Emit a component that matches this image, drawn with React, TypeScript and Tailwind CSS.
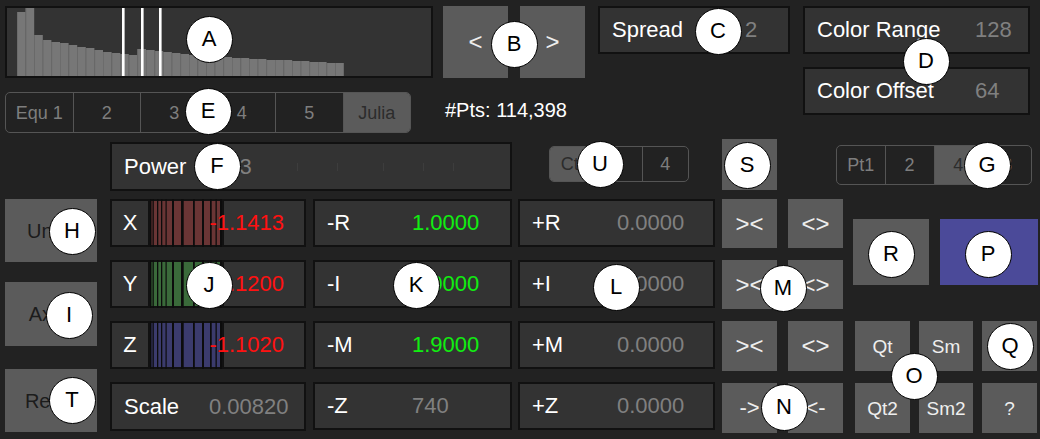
import React from "react";

const panel = "bg-[#333333] border-2 border-[#111111]";
const btn = "bg-[#5b5b5b] flex items-center justify-center";

const barTops = [
  12, 7, 35, 40, 42, 43, 45, 47, 48, 50, 52, 53, 54, 55, 49, 50, 51, 52, 53, 54, 55,
  56, 56, 57, 57, 58, 58, 59, 59, 60, 60, 60, 61, 61, 62, 62, 63, 63,
];

const stripeLines: [number, number][] = [
  [0, 1.5], [2.5, 1.3], [7, 1.3], [11, 1.3], [15.5, 1.2], [22, 2], [31, 2.7],
  [43, 1.8], [52, 2], [60, 1.7], [65.5, 1.3], [70, 2],
];

const marks: [string, number, number][] = [
  ["A", 209, 39], ["B", 514, 44], ["C", 718, 31], ["D", 926, 61], ["E", 208, 111],
  ["F", 217, 166], ["G", 987, 165], ["H", 72, 231], ["I", 69, 315], ["J", 209, 285],
  ["K", 416, 285], ["L", 616, 287], ["M", 783, 288], ["N", 784, 407], ["O", 914, 376],
  ["P", 988, 254], ["Q", 1010, 346], ["R", 891, 254], ["S", 747, 165], ["T", 72, 400],
  ["U", 600, 164],
];

const Histogram = () => (
  <div className={`${panel} w-[428px] h-[72px]`}>
    <svg width="424" height="68" className="block">
      {barTops.map((t, i) => {
        const x = 10 + i * 8.6;
        const y = Math.max(0, t - 8);
        return (
          <g key={i}>
            <rect x={x} y={y} width="8.6" height={68 - y} fill="#777777" />
            <rect x={x} y={y} width="0.8" height={68 - y} fill="#6a6a6a" />
          </g>
        );
      })}
      {[115, 134, 152].map((x) => (
        <rect key={x} x={x} y="0" width="2.6" height="68" fill="#ffffff" />
      ))}
    </svg>
  </div>
);

const Segmented = ({ items, active, w, h }: { items: string[]; active: number; w: string; h: string }) => (
  <div className={`${w} ${h} flex rounded-[5px] border-[1.5px] border-[#555555] overflow-hidden text-[18px]`}>
    {items.map((it, i) => (
      <div
        key={i}
        className={`flex-1 flex items-center justify-center ${i > 0 ? "border-l-[1.5px] border-[#555555]" : ""} ${
          i === active ? "bg-[#5b5b5b] text-[#2c2c2c]" : "text-[#7e7e7e]"
        }`}
      >
        {it}
      </div>
    ))}
  </div>
);

const Stripes = ({ color }: { color: string }) => (
  <svg width="72" height="48" className="block shrink-0">
    <rect x="0" y="0" width="72" height="48" fill={color} />
    <rect x="0" y="0" width="72" height="2" fill="#111111" />
    <rect x="0" y="46" width="72" height="2" fill="#111111" />
    {stripeLines.map(([x, w]) => (
      <rect key={x} x={x} y="0" width={w} height="48" fill="#0c0c0c" />
    ))}
  </svg>
);

const AxisPanel = ({ label, value, color }: { label: string; value: string; color: string }) => (
  <div className="flex w-[196px] h-[48px]">
    <div className={`${panel} w-[40px] flex items-center justify-center text-white shrink-0`}>{label}</div>
    <Stripes color={color} />
    <div className={`${panel} w-[84px] flex items-center justify-end pr-[20px] text-[#ff1111] whitespace-nowrap`}>
      {value}
    </div>
  </div>
);

const ValuePanel = ({
  label,
  value,
  valueColor = "text-[#808080]",
  w = "w-[199px]",
}: {
  label: string;
  value: string;
  valueColor?: string;
  w?: string;
}) => (
  <div className={`${panel} ${w} h-[48px] flex items-center`}>
    <div className="w-[97px] pl-[12px] text-white">{label}</div>
    <div className={valueColor}>{value}</div>
  </div>
);

const Btn = ({ children, cls }: { children?: React.ReactNode; cls: string }) => (
  <div className={`${btn} ${cls}`}>{children}</div>
);

export default function App() {
  return (
    <div className="relative w-[1040px] h-[439px] bg-[#222222] overflow-hidden font-['Liberation_Sans',Arial,sans-serif] text-[22px] leading-none">
      {/* top area */}
      <div className="flex pt-[6px] pl-[5px]">
        <div className="flex flex-col w-[428px]">
          <Histogram />
          <div className="mt-[14px]">
            <Segmented items={["Equ 1", "2", "3", "4", "5", "Julia"]} active={5} w="w-[406px]" h="h-[41px]" />
          </div>
        </div>
        <div className="ml-[10px] flex flex-col">
          <div className="flex gap-[12px] text-[24px] text-[#eeeeee]">
            <Btn cls="w-[65px] h-[72px]">&lt;</Btn>
            <Btn cls="w-[65px] h-[72px]">&gt;</Btn>
          </div>
          <div className="mt-[22px] pl-[2px] text-[20px] text-white">#Pts: 114,398</div>
        </div>
        <div className="ml-[13px]">
          <div className={`${panel} w-[192px] h-[48px] flex items-center`}>
            <div className="w-[145px] pl-[12px] text-white">Spread</div>
            <div className="text-[#808080]">2</div>
          </div>
        </div>
        <div className="ml-[13px] flex flex-col gap-[13px]">
          <div className={`${panel} w-[227px] h-[48px] flex items-center`}>
            <div className="w-[170px] pl-[12px] text-white">Color Range</div>
            <div className="text-[#808080]">128</div>
          </div>
          <div className={`${panel} w-[227px] h-[48px] flex items-center`}>
            <div className="w-[170px] pl-[12px] text-white">Color Offset</div>
            <div className="text-[#808080]">64</div>
          </div>
        </div>
      </div>

      {/* bottom area */}
      <div className="flex pl-[5px] mt-[6px]">
        <div className="flex flex-col w-[92px] text-[20px] text-[#1c1c1c]">
          <Btn cls="mt-[60px] h-[63px]">Undo</Btn>
          <Btn cls="mt-[20px] h-[64px]">Axes</Btn>
          <Btn cls="mt-[23px] h-[63px]">Reset</Btn>
        </div>
        <div className="ml-[13px] grid grid-cols-[203px_205px_204px_66px_65px_187px] grid-rows-[60px_61px_61px_61px_51px]">
          {/* row 0 */}
          <div className={`${panel} col-span-2 mt-[3px] w-[402px] h-[49px] flex items-center`}>
            <div className="w-[97px] pl-[12px] text-white">Power</div>
            <div className="w-[60px] text-[#808080]">2.23</div>
            <svg width="200" height="12" className="block">
              {[28, 68, 114, 154, 184].map((x) => (
                <rect key={x} x={x} y="2" width="1" height="8" fill="#3d3d3d" />
              ))}
            </svg>
          </div>
          <div className="mt-[7px] ml-[31px]">
            <Segmented items={["Ctr", "3", "4"]} active={0} w="w-[140px]" h="h-[36px]" />
          </div>
          <Btn cls="w-[55px] h-[51px] text-[#eeeeee]" />
          <div />
          <div className="-ml-[17px] mt-[6px]">
            <Segmented items={["Pt1", "2", "4", "8"]} active={2} w="w-[196px]" h="h-[40px]" />
          </div>

          {/* row 1 */}
          <AxisPanel label="X" value="-1.1413" color="#6a3535" />
          <ValuePanel label="-R" value="1.0000" valueColor="text-[#11ee11]" />
          <ValuePanel label="+R" value="0.0000" w="w-[197px]" />
          <Btn cls="w-[55px] h-[49px] text-[24px] text-[#eeeeee]">&gt;&lt;</Btn>
          <Btn cls="w-[55px] h-[49px] text-[24px] text-[#eeeeee]">&lt;&gt;</Btn>
          <div className="row-span-2 flex items-start mt-[20px] gap-[11px]">
            <Btn cls="w-[76px] h-[66px]" />
            <div className="w-[98px] h-[66px] bg-[#4b4a99]" />
          </div>

          {/* row 2 */}
          <AxisPanel label="Y" value="-1.1200" color="#3a6a3a" />
          <ValuePanel label="-I" value="1.0000" valueColor="text-[#11ee11]" />
          <ValuePanel label="+I" value="0.0000" w="w-[197px]" />
          <Btn cls="w-[55px] h-[49px] text-[24px] text-[#eeeeee]">&gt;&lt;</Btn>
          <Btn cls="w-[55px] h-[49px] text-[24px] text-[#eeeeee]">&lt;&gt;</Btn>

          {/* row 3 */}
          <AxisPanel label="Z" value="-1.1020" color="#3b3b6d" />
          <ValuePanel label="-M" value="1.9000" valueColor="text-[#11ee11]" />
          <ValuePanel label="+M" value="0.0000" w="w-[197px]" />
          <Btn cls="w-[55px] h-[50px] text-[24px] text-[#eeeeee]">&gt;&lt;</Btn>
          <Btn cls="w-[55px] h-[50px] text-[24px] text-[#eeeeee]">&lt;&gt;</Btn>
          <div className="flex gap-[9px] ml-[2px] text-[19px] text-[#eeeeee]">
            <Btn cls="w-[55px] h-[50px]">Qt</Btn>
            <Btn cls="w-[54px] h-[50px]">Sm</Btn>
            <Btn cls="w-[55px] h-[50px]" />
          </div>

          {/* row 4 */}
          <ValuePanel label="Scale" value="0.00820" w="w-[196px] h-[49px]" />
          <ValuePanel label="-Z" value="740" />
          <ValuePanel label="+Z" value="0.0000" w="w-[197px]" />
          <Btn cls="mt-[1px] w-[55px] h-[50px] text-[22px] text-[#eeeeee]">-&gt;</Btn>
          <Btn cls="mt-[1px] w-[55px] h-[50px] text-[22px] text-[#eeeeee]">&lt;-</Btn>
          <div className="flex gap-[9px] ml-[2px] mt-[1px] text-[19px] text-[#eeeeee]">
            <Btn cls="w-[55px] h-[50px]">Qt2</Btn>
            <Btn cls="w-[54px] h-[50px]">Sm2</Btn>
            <Btn cls="w-[55px] h-[50px]">?</Btn>
          </div>
        </div>
      </div>

      {/* annotation markers */}
      {marks.map(([l, x, y]) => (
        <div
          key={l}
          className="absolute w-[47px] h-[47px] rounded-full bg-white border border-black flex items-center justify-center text-black text-[22px]"
          style={{ left: x - 23.5, top: y - 23.5 }}
        >
          {l}
        </div>
      ))}
    </div>
  );
}
